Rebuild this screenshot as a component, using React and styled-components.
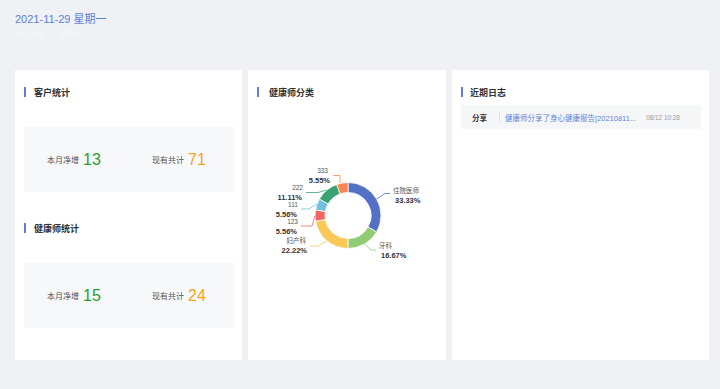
import React from 'react'
import styled, { createGlobalStyle } from 'styled-components'

const GlobalStyle = createGlobalStyle`
  body {
    margin: 0;
    background: #f0f1f5;
    font-family: 'Liberation Sans', 'Noto Sans CJK SC', sans-serif;
  }
`

const Page = styled.div`
  width: 720px;
  height: 389px;
  padding: 0 11px 0 15px;
  box-sizing: border-box;
  overflow: hidden;
`

const Header = styled.div`
  height: 70px;
  padding-top: 12px;
  box-sizing: border-box;
`

const DateText = styled.div`
  font-size: 11px;
  line-height: 14px;
  color: #5b7fd4;
`

const SubLine = styled.div`
  margin-top: 3px;
  font-size: 7px;
  color: #f7f8fb;
  display: flex;
  gap: 16px;
`

const Grid = styled.div`
  display: grid;
  grid-template-columns: 227px 198px 257px;
  column-gap: 6px;
  height: 290px;
`

const Card = styled.div`
  background: #fff;
  padding: 12px 8px 0 9px;
  box-sizing: border-box;
  display: flex;
  flex-direction: column;
`

const Title = styled.div`
  height: 20px;
  display: flex;
  align-items: center;
  font-size: 9px;
  font-weight: bold;
  color: #333;
  margin-top: ${p => p.$top || 0}px;

  &::before {
    content: '';
    width: 2px;
    height: 10px;
    background: #5b7fd4;
    margin-right: ${p => p.$gap || 8}px;
  }
`

const StatBox = styled.div`
  margin-top: 25px;
  height: 65px;
  background: #f7f8fa;
  display: grid;
  grid-template-columns: 1fr 1fr;
  align-items: center;
`

const StatItem = styled.div`
  padding-left: 23px;
  display: flex;
  align-items: center;
`

const StatLabel = styled.span`
  font-size: 8px;
  color: #555;
  margin-right: 4px;
`

const StatNum = styled.span`
  font-size: 16px;
  color: ${p => p.$color};
`

const ChartSvg = styled.svg`
  display: block;
  margin: 13px -8px 0 -9px;
`

const LogRow = styled.div`
  margin-top: 3px;
  height: 24px;
  background: #f5f6f8;
  display: flex;
  align-items: center;
  padding-left: 11px;
  white-space: nowrap;
`

const LogType = styled.span`
  font-size: 7.5px;
  font-weight: bold;
  color: #333;
`

const Sep = styled.span`
  width: 1px;
  height: 9px;
  background: #dcdfe6;
  margin: 0 5px 0 12px;
`

const LogLink = styled.span`
  font-size: 7.5px;
  color: #5f84d8;
`

const LogDate = styled.span`
  font-size: 6.4px;
  color: #999;
  margin-left: 10px;
`

const CX = 348
const CY = 215.5
const R0 = 23
const R1 = 33

const pt = (r, deg) => {
  const a = (deg * Math.PI) / 180
  return [CX + r * Math.sin(a), CY - r * Math.cos(a)]
}

const arc = (a0, a1) => {
  const [x0, y0] = pt(R1, a0)
  const [x1, y1] = pt(R1, a1)
  const [x2, y2] = pt(R0, a1)
  const [x3, y3] = pt(R0, a0)
  const large = a1 - a0 > 180 ? 1 : 0
  return `M${x0} ${y0} A${R1} ${R1} 0 ${large} 1 ${x1} ${y1} L${x2} ${y2} A${R0} ${R0} 0 ${large} 0 ${x3} ${y3} Z`
}

const slices = [
  { name: '住院医师', pct: '33.33%', color: '#5470c6', a: [0, 120], line: [[376.6, 199], [385, 193.5], [390, 193.5]], tx: 393, ty: 191, px: 395, anchor: 'start' },
  { name: '牙科', pct: '16.67%', color: '#91cc75', a: [120, 180], line: [[364.5, 244], [371, 250], [376, 250]], tx: 379, ty: 246, px: 381, anchor: 'start' },
  { name: '妇产科', pct: '22.22%', color: '#fac858', a: [180, 260], line: [[326.8, 240.8], [318, 246], [310, 246]], tx: 306, ty: 241, px: 307, anchor: 'end' },
  { name: '123', pct: '5.56%', color: '#ee6666', a: [260, 280], line: [[315, 216], [312, 226], [301, 226]], tx: 298, ty: 222, px: 297, anchor: 'end' },
  { name: '111', pct: '5.56%', color: '#73c0de', a: [280, 300], line: [[317, 204], [309, 209], [301, 209]], tx: 298, ty: 205, px: 297, anchor: 'end' },
  { name: '222', pct: '11.11%', color: '#3ba272', a: [300, 340], line: [[326.8, 190], [318, 192.5], [306, 192.5]], tx: 303, ty: 188, px: 302, anchor: 'end' },
  { name: '333', pct: '5.55%', color: '#fc8452', a: [340, 360], line: [[340, 183], [340, 175.5], [333, 175.5]], tx: 328, ty: 171, px: 330, anchor: 'end' },
]

function Donut() {
  return (
    <ChartSvg width="198" height="200" viewBox="248 115 198 200">
      {slices.map(s => (
        <path key={s.name} d={arc(s.a[0], s.a[1])} fill={s.color} stroke="#fff" strokeWidth="0.8" />
      ))}
      {slices.map(s => (
        <g key={s.name + 'l'}>
          <polyline
            points={s.line.map(p => p.join(',')).join(' ')}
            fill="none"
            stroke={s.color}
            strokeWidth="0.8"
          />
          <text x={s.tx} y={s.ty} dy="2.2" fontSize="6.5" fill="#555" textAnchor={s.anchor}>
            {s.name}
          </text>
          <text x={s.px} y={s.ty + 9} dy="2.6" fontSize="7.5" fontWeight="bold" fill="#333" textAnchor={s.anchor}>
            {s.pct}
          </text>
        </g>
      ))}
    </ChartSvg>
  )
}

function Stats({ added, total }) {
  return (
    <StatBox>
      <StatItem>
        <StatLabel>本月净增</StatLabel>
        <StatNum $color="#2a9d2a">{added}</StatNum>
      </StatItem>
      <StatItem>
        <StatLabel>现有共计</StatLabel>
        <StatNum $color="#f5a623">{total}</StatNum>
      </StatItem>
    </StatBox>
  )
}

export default function App() {
  return (
    <Page>
      <GlobalStyle />
      <Header>
        <DateText>2021-11-29 星期一</DateText>
        <SubLine>
          <span>欢迎回来</span>
          <span>管理员</span>
        </SubLine>
      </Header>
      <Grid>
        <Card>
          <Title>客户统计</Title>
          <Stats added={13} total={71} />
          <Title $top={26}>健康师统计</Title>
          <Stats added={15} total={24} />
        </Card>
        <Card>
          <Title $gap={10}>健康师分类</Title>
          <Donut />
        </Card>
        <Card>
          <Title $gap={7}>近期日志</Title>
          <LogRow>
            <LogType>分享</LogType>
            <Sep />
            <LogLink>健康师分享了身心健康报告[20210811...</LogLink>
            <LogDate>08/12 10:28</LogDate>
          </LogRow>
        </Card>
      </Grid>
    </Page>
  )
}
